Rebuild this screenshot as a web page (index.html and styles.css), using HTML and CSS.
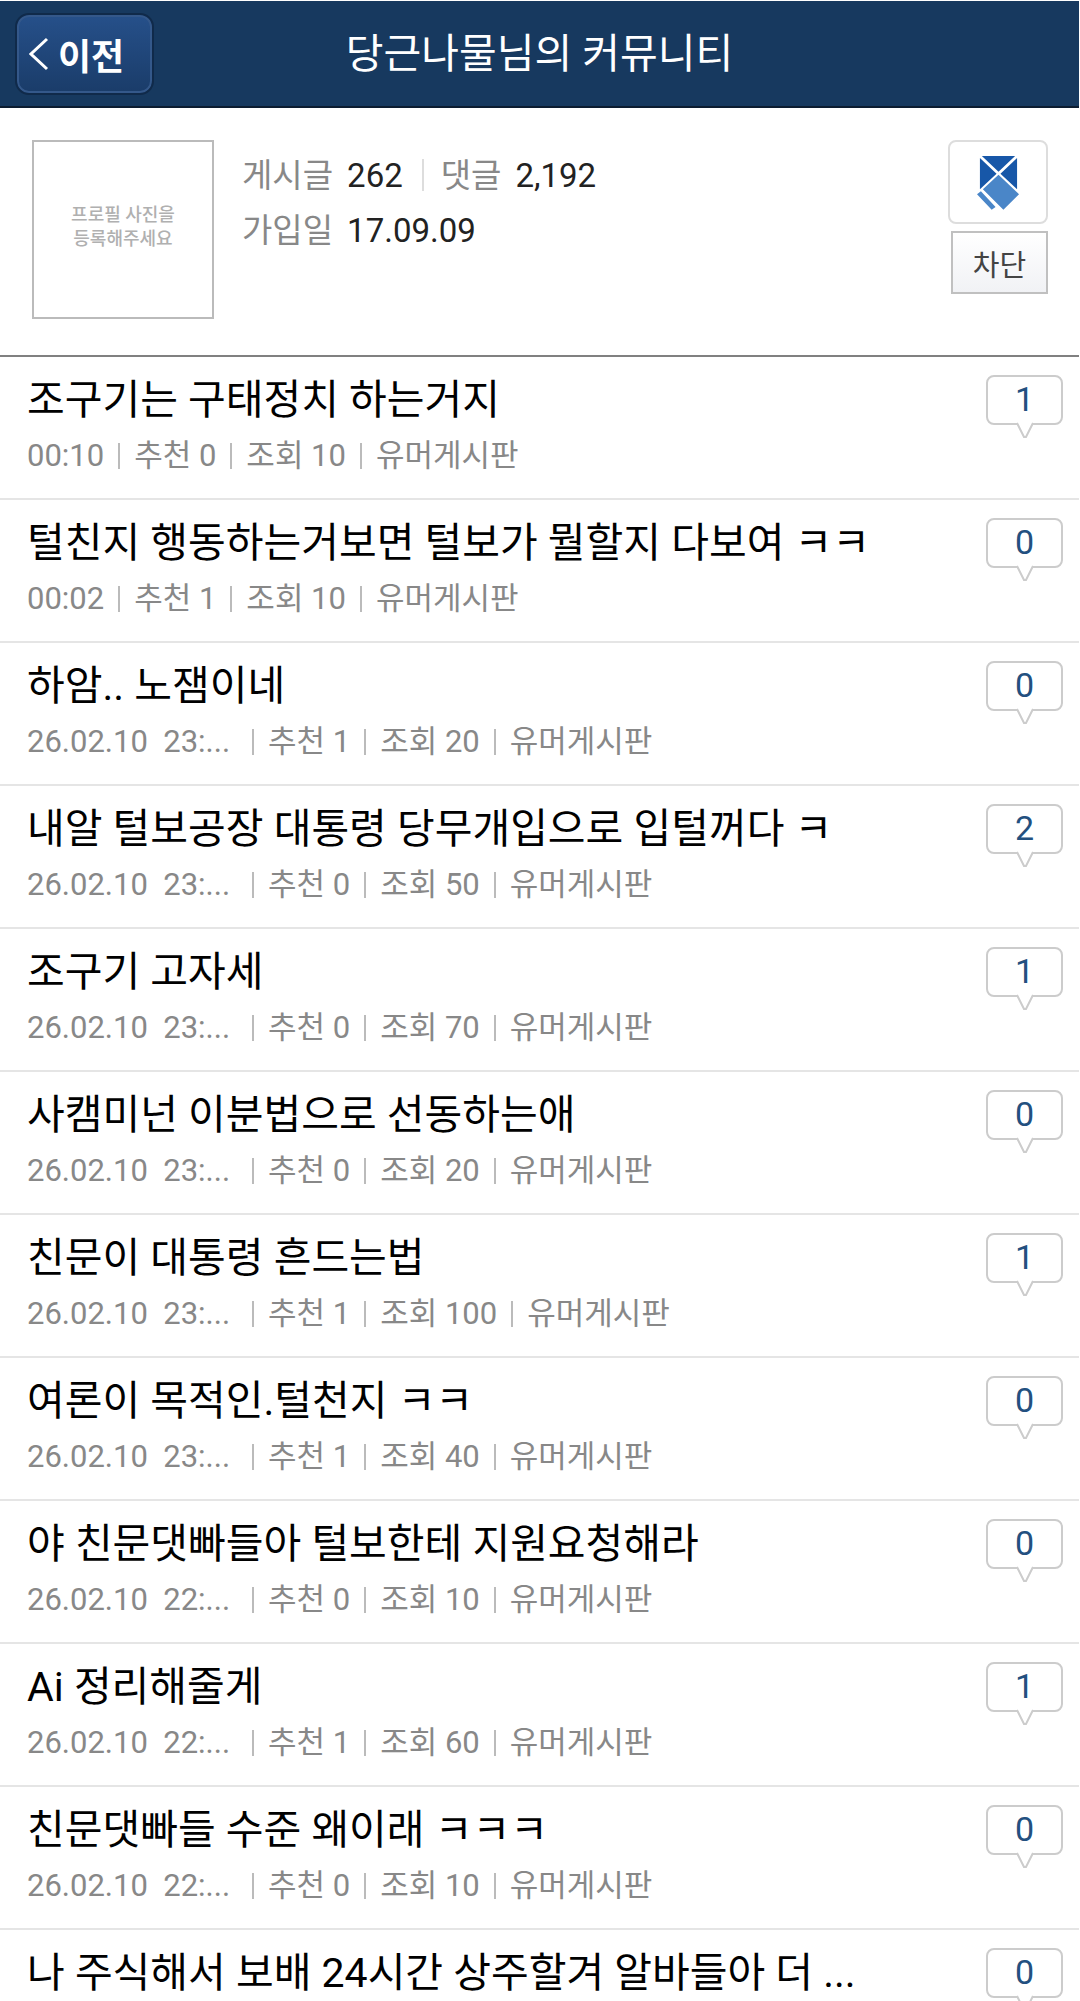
FILE: index.html
```html
<!DOCTYPE html>
<html lang="ko">
<head>
  <meta charset="UTF-8" />
  <meta name="viewport" content="width=device-width, initial-scale=1.0" />
  <title>당근나물님의 커뮤니티</title>
  <link rel="stylesheet" href="styles.css">
</head>
<body>
<div class="page">

  <!-- Top bar -->
  <header class="top-bar">
    <button type="button" class="back-btn">
      <svg class="back-arrow" viewBox="0 0 20 34" aria-hidden="true"><path d="M18 2 2 17l16 15" /></svg>이전
    </button>
    <h1>당근나물님의 커뮤니티</h1>
  </header>

  <!-- Member profile -->
  <section class="profile">
    <div class="photo">프로필 사진을<br>등록해주세요</div>
    <dl class="stats">
      <div class="stat-line">
        <dt>게시글</dt><dd>262</dd>
        <dt class="split">댓글</dt><dd>2,192</dd>
      </div>
      <div class="stat-line">
        <dt>가입일</dt><dd>17.09.09</dd>
      </div>
    </dl>
    <div class="actions">
      <button type="button" class="note-btn" aria-label="쪽지">
        <svg viewBox="0 0 44 56" aria-hidden="true">
          <path fill="#1757a8" d="M5 1h34L22 17zM3 3l17 16L3 35zM41 3v32L24 19z" />
          <path fill="#4a86c8" d="M22 20l21 20-16 16L6 35zM4 37l15 16-4 3L0 40z" />
        </svg>
      </button>
      <button type="button" class="block-btn">차단</button>
    </div>
  </section>

  <!-- Posts -->
  <ul class="posts">
    <li class="post">
      <a href="#" class="post-link">
        <span class="title">조구기는 구태정치 하는거지</span>
        <span class="meta"><span>00:10</span><span>추천 0</span><span>조회 10</span><span>유머게시판</span></span>
      </a>
      <a href="#" class="bubble">1<svg class="tail" viewBox="0 0 18 17" aria-hidden="true"><path d="M1 1l7 14h2l7-14" /></svg></a>
    </li>
    <li class="post">
      <a href="#" class="post-link">
        <span class="title">털친지 행동하는거보면 털보가 뭘할지 다보여 ㅋㅋ</span>
        <span class="meta"><span>00:02</span><span>추천 1</span><span>조회 10</span><span>유머게시판</span></span>
      </a>
      <a href="#" class="bubble">0<svg class="tail" viewBox="0 0 18 17" aria-hidden="true"><path d="M1 1l7 14h2l7-14" /></svg></a>
    </li>
    <li class="post">
      <a href="#" class="post-link">
        <span class="title">하암.. 노잼이네</span>
        <span class="meta"><span class="date">26.02.10&nbsp; 23:...</span><span>추천 1</span><span>조회 20</span><span>유머게시판</span></span>
      </a>
      <a href="#" class="bubble">0<svg class="tail" viewBox="0 0 18 17" aria-hidden="true"><path d="M1 1l7 14h2l7-14" /></svg></a>
    </li>
    <li class="post">
      <a href="#" class="post-link">
        <span class="title">내알 털보공장 대통령 당무개입으로 입털꺼다 ㅋ</span>
        <span class="meta"><span class="date">26.02.10&nbsp; 23:...</span><span>추천 0</span><span>조회 50</span><span>유머게시판</span></span>
      </a>
      <a href="#" class="bubble">2<svg class="tail" viewBox="0 0 18 17" aria-hidden="true"><path d="M1 1l7 14h2l7-14" /></svg></a>
    </li>
    <li class="post">
      <a href="#" class="post-link">
        <span class="title">조구기 고자세</span>
        <span class="meta"><span class="date">26.02.10&nbsp; 23:...</span><span>추천 0</span><span>조회 70</span><span>유머게시판</span></span>
      </a>
      <a href="#" class="bubble">1<svg class="tail" viewBox="0 0 18 17" aria-hidden="true"><path d="M1 1l7 14h2l7-14" /></svg></a>
    </li>
    <li class="post">
      <a href="#" class="post-link">
        <span class="title">사캠미넌 이분법으로 선동하는애</span>
        <span class="meta"><span class="date">26.02.10&nbsp; 23:...</span><span>추천 0</span><span>조회 20</span><span>유머게시판</span></span>
      </a>
      <a href="#" class="bubble">0<svg class="tail" viewBox="0 0 18 17" aria-hidden="true"><path d="M1 1l7 14h2l7-14" /></svg></a>
    </li>
    <li class="post">
      <a href="#" class="post-link">
        <span class="title">친문이 대통령 흔드는법</span>
        <span class="meta"><span class="date">26.02.10&nbsp; 23:...</span><span>추천 1</span><span>조회 100</span><span>유머게시판</span></span>
      </a>
      <a href="#" class="bubble">1<svg class="tail" viewBox="0 0 18 17" aria-hidden="true"><path d="M1 1l7 14h2l7-14" /></svg></a>
    </li>
    <li class="post">
      <a href="#" class="post-link">
        <span class="title">여론이 목적인.털천지 ㅋㅋ</span>
        <span class="meta"><span class="date">26.02.10&nbsp; 23:...</span><span>추천 1</span><span>조회 40</span><span>유머게시판</span></span>
      </a>
      <a href="#" class="bubble">0<svg class="tail" viewBox="0 0 18 17" aria-hidden="true"><path d="M1 1l7 14h2l7-14" /></svg></a>
    </li>
    <li class="post">
      <a href="#" class="post-link">
        <span class="title">야 친문댓빠들아 털보한테 지원요청해라</span>
        <span class="meta"><span class="date">26.02.10&nbsp; 22:...</span><span>추천 0</span><span>조회 10</span><span>유머게시판</span></span>
      </a>
      <a href="#" class="bubble">0<svg class="tail" viewBox="0 0 18 17" aria-hidden="true"><path d="M1 1l7 14h2l7-14" /></svg></a>
    </li>
    <li class="post">
      <a href="#" class="post-link">
        <span class="title">Ai 정리해줄게</span>
        <span class="meta"><span class="date">26.02.10&nbsp; 22:...</span><span>추천 1</span><span>조회 60</span><span>유머게시판</span></span>
      </a>
      <a href="#" class="bubble">1<svg class="tail" viewBox="0 0 18 17" aria-hidden="true"><path d="M1 1l7 14h2l7-14" /></svg></a>
    </li>
    <li class="post">
      <a href="#" class="post-link">
        <span class="title">친문댓빠들 수준 왜이래 ㅋㅋㅋ</span>
        <span class="meta"><span class="date">26.02.10&nbsp; 22:...</span><span>추천 0</span><span>조회 10</span><span>유머게시판</span></span>
      </a>
      <a href="#" class="bubble">0<svg class="tail" viewBox="0 0 18 17" aria-hidden="true"><path d="M1 1l7 14h2l7-14" /></svg></a>
    </li>
    <li class="post">
      <a href="#" class="post-link">
        <span class="title">나 주식해서 보배 24시간 상주할겨 알바들아 더 ...</span>
      </a>
      <a href="#" class="bubble">0<svg class="tail" viewBox="0 0 18 17" aria-hidden="true"><path d="M1 1l7 14h2l7-14" /></svg></a>
    </li>
  </ul>

</div>
</body>
</html>
```
FILE: styles.css
```css
/* Basic resets */
* { margin: 0; padding: 0; box-sizing: border-box; }
body { background: #fff; color: #111; font-family: Roboto, "Noto Sans CJK KR", sans-serif; }
button { font-family: inherit; cursor: pointer; }
a { color: inherit; text-decoration: none; }
svg { display: block; }

.page {
  height: 100vh;
  overflow: hidden;
  padding: 1px 1px 0 0;
}

/* === Top bar === */
.top-bar {
  display: grid;
  grid-template-columns: 1fr auto 1fr;
  align-items: center;
  height: 107px;
  padding: 0 15px;
  background: #17395f;
  border-bottom: 2px solid #0c1c30;
}
.top-bar h1 {
  font-size: 41px;
  font-weight: 400;
  line-height: 50px;
  color: #fff;
}
.back-btn {
  justify-self: start;
  display: flex;
  align-items: center;
  gap: 9px;
  height: 82px;
  padding: 0 28px 0 12px;
  background: linear-gradient(#26508a, #1a3c69);
  border: 2px solid #102a4a;
  border-radius: 14px;
  box-shadow: inset 0 0 0 2px #34588a;
  font-size: 36px;
  font-weight: 700;
  color: #fff;
}
.back-arrow {
  width: 20px;
  height: 34px;
  fill: none;
  stroke: #fff;
  stroke-width: 3;
}

/* === Profile === */
.profile {
  display: flex;
  align-items: flex-start;
  padding: 32px 31px 36px 32px;
  border-bottom: 2px solid #808080;
}
.photo {
  display: flex;
  align-items: center;
  justify-content: center;
  width: 182px;
  height: 179px;
  padding-bottom: 6px;
  border: 2px solid #bbb;
  font-size: 18px;
  font-weight: 500;
  line-height: 24px;
  text-align: center;
  color: #b0b0b0;
}
.stats {
  flex: 1;
  padding: 8px 0 0 28px;
  font-size: 33px;
  line-height: 55px;
}
.stat-line { display: flex; align-items: center; }
.stats dt { color: #888; }
.stats dd { margin-left: 14px; color: #222; }
.stats .split::before {
  content: "";
  display: inline-block;
  width: 2px;
  height: 32px;
  margin: 0 17px 0 19px;
  background: #ddd;
  vertical-align: -4px;
}
.actions {
  display: flex;
  flex-direction: column;
  align-items: flex-end;
  gap: 7px;
}
.note-btn {
  display: flex;
  align-items: center;
  justify-content: center;
  width: 100px;
  height: 84px;
  background: #fff;
  border: 2px solid #ddd;
  border-radius: 8px;
}
.note-btn svg { width: 43px; height: 55px; }
.block-btn {
  width: 97px;
  height: 63px;
  background: linear-gradient(#fff, #f1f2f5);
  border: 2px solid #c0c0c0;
  font-size: 29px;
  color: #444;
}

/* === Posts === */
.posts { list-style: none; }
.post {
  display: flex;
  align-items: flex-start;
  padding: 18px 16px 24px 27px;
  border-bottom: 2px solid #e5e5e5;
}
.post-link { flex: 1; }
.title {
  display: block;
  margin-bottom: 13px;
  font-size: 41px;
  line-height: 50px;
  color: #000;
}
.meta {
  display: flex;
  align-items: center;
  font-size: 31px;
  line-height: 36px;
  color: #888;
}
.meta span + span::before {
  content: "";
  display: inline-block;
  width: 2px;
  height: 26px;
  margin: 0 14px;
  background: #bbb;
  vertical-align: -3px;
}
.meta .date { width: 211px; }

/* Comment count */
.bubble {
  position: relative;
  width: 77px;
  height: 50px;
  border: 2px solid #ccc;
  border-radius: 8px;
  font-size: 34px;
  line-height: 44px;
  text-align: center;
  color: #23507f;
}
.tail {
  position: absolute;
  top: 45px;
  left: 28px;
  width: 18px;
  height: 17px;
  fill: #fff;
  stroke: #ccc;
  stroke-width: 2;
}
```
